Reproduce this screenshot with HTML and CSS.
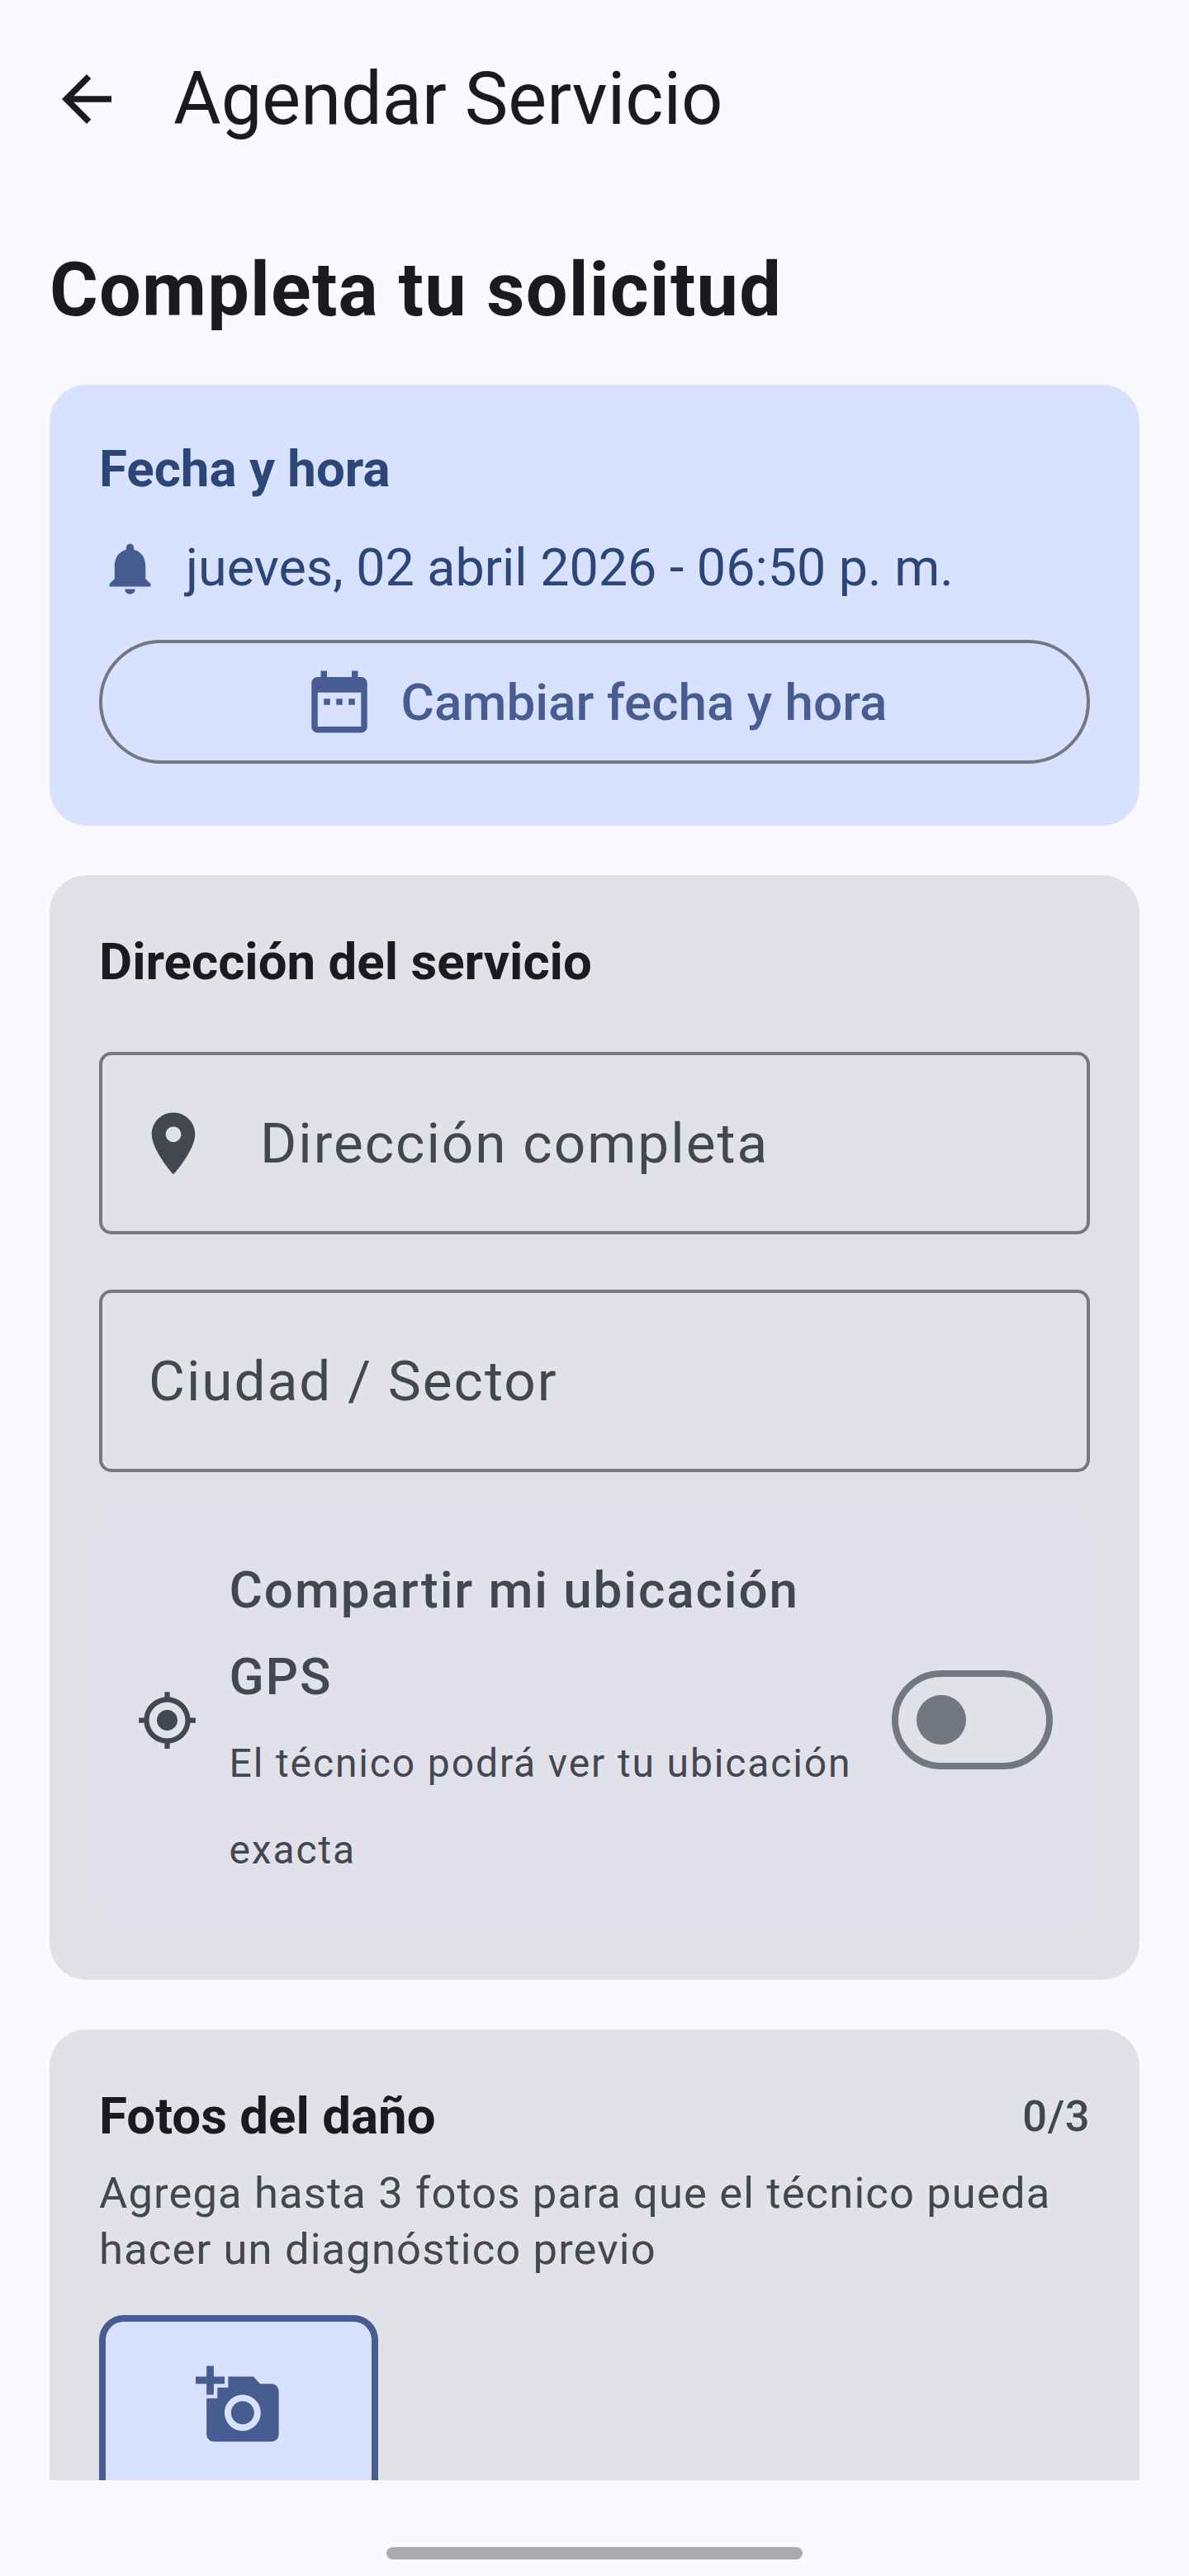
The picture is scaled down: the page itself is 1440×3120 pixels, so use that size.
FILE: index.html
```html
<!DOCTYPE html>
<html lang="es">
<head>
<meta charset="utf-8">
<title>Agendar Servicio</title>
<link rel="stylesheet" href="styles.css">
</head>
<body>
<div class="screen">
  <main class="scroll">
    <header class="topbar">
      <svg class="icon-back" viewBox="0 0 24 24"><path d="M20 11H7.83l5.59-5.59L12 4l-8 8 8 8 1.41-1.41L7.83 13H20v-2z"/></svg>
      <h1 class="topbar-title">Agendar Servicio</h1>
    </header>
    <h2 class="headline">Completa tu solicitud</h2>

    <section class="card card-blue">
      <h3 class="card-title title-blue">Fecha y hora</h3>
      <div class="date-row">
        <svg class="icon-bell" viewBox="0 0 24 24"><path d="M12 22c1.1 0 2-.9 2-2h-4c0 1.1.9 2 2 2zm6-6v-5c0-3.07-1.63-5.64-4.5-6.32V4c0-.83-.67-1.5-1.5-1.5s-1.5.67-1.5 1.5v.68C7.64 5.36 6 7.92 6 11v5l-2 2v1h16v-1l-2-2z"/></svg>
        <span class="date-text">jueves, 02 abril 2026 - 06:50 p. m.</span>
      </div>
      <button class="outline-btn" type="button">
        <svg class="icon-cal" viewBox="0 0 24 24"><path d="M9 11H7v2h2v-2zm4 0h-2v2h2v-2zm4 0h-2v2h2v-2zm2-7h-1V2h-2v2H8V2H6v2H5c-1.11 0-1.99.9-1.99 2L3 20c0 1.1.89 2 2 2h14c1.1 0 2-.9 2-2V6c0-1.1-.9-2-2-2zm0 16H5V9h14v11z"/></svg>
        <span>Cambiar fecha y hora</span>
      </button>
    </section>

    <section class="card card-gray">
      <h3 class="card-title">Dirección del servicio</h3>
      <div class="field field-address">
        <svg class="icon-pin" viewBox="0 0 24 24"><path d="M12 2C8.13 2 5 5.13 5 9c0 5.25 7 13 7 13s7-7.75 7-13c0-3.87-3.13-7-7-7zm0 9.5c-1.38 0-2.5-1.12-2.5-2.5s1.12-2.5 2.5-2.5 2.5 1.12 2.5 2.5-1.12 2.5-2.5 2.5z"/></svg>
        <span class="field-label">Dirección completa</span>
      </div>
      <div class="field field-city">
        <span class="field-label">Ciudad / Sector</span>
      </div>
      <div class="gps-row">
        <svg class="icon-gps" viewBox="0 0 24 24"><path d="M12 8c-2.21 0-4 1.79-4 4s1.79 4 4 4 4-1.79 4-4-1.79-4-4-4zm8.94 3c-.46-4.17-3.77-7.48-7.94-7.94V1h-2v2.06C6.83 3.52 3.52 6.83 3.06 11H1v2h2.06c.46 4.17 3.77 7.48 7.94 7.94V23h2v-2.06c4.17-.46 7.48-3.77 7.94-7.94H23v-2h-2.06zM12 19c-3.87 0-7-3.13-7-7s3.13-7 7-7 7 3.13 7 7-3.13 7-7 7z"/></svg>
        <div class="gps-text">
          <div class="gps-title">Compartir mi ubicación GPS</div>
          <div class="gps-sub">El técnico podrá ver tu ubicación exacta</div>
        </div>
        <div class="switch"><span class="switch-knob"></span></div>
      </div>
    </section>

    <section class="card card-gray">
      <div class="photos-head">
        <h3 class="card-title photos-title">Fotos del daño</h3>
        <span class="photos-count">0/3</span>
      </div>
      <p class="photos-desc">Agrega hasta 3 fotos para que el técnico pueda hacer un diagnóstico previo</p>
      <div class="photo-tile">
        <svg class="icon-addphoto" viewBox="0 0 24 24"><path d="M3 4V1h2v3h3v2H5v3H3V6H0V4h3zm3 6V7h3V4h7l1.83 2H21c1.1 0 2 .9 2 2v12c0 1.1-.9 2-2 2H5c-1.1 0-2-.9-2-2V10h3zm7 9c2.76 0 5-2.24 5-5s-2.24-5-5-5-5 2.24-5 5 2.24 5 5 5zm-3.2-5c0 1.77 1.43 3.2 3.2 3.2s3.2-1.43 3.2-3.2-1.43-3.2-3.2-3.2-3.2 1.43-3.2 3.2z"/></svg>
      </div>
    </section>
  </main>
  <div class="navbar"><span class="nav-pill"></span></div>
</div>
</body>
</html>
```
FILE: styles.css
```css
* { box-sizing: border-box; }
html, body { margin: 0; padding: 0; }
body {
  background: #f9f9ff;
  color: #1a1b20;
  font-family: Roboto, "Noto Sans", sans-serif;
}
h1, h2, h3, p { margin: 0; font-weight: 400; }
svg { display: block; flex: none; fill: currentColor; }

.screen {
  width: 1440px;
  height: 3120px;
  display: flex;
  flex-direction: column;
  overflow: hidden;
}
.scroll {
  height: 3004px;
  flex: none;
  overflow: hidden;
  padding: 0 60px;
  display: flex;
  flex-direction: column;
}

.topbar {
  height: 240px;
  flex: none;
  display: flex;
  align-items: center;
  gap: 60px;
}
.icon-back { width: 90px; height: 90px; }
.topbar-title { font-size: 88.4px; line-height: 105px; }

.headline {
  flex: none;
  font-size: 90px;
  line-height: 120px;
  letter-spacing: 1.2px;
  font-weight: 700;
  margin-top: 52px;
  height: 174px;
}

.card {
  flex: none;
  border-radius: 45px;
  padding: 60px;
  margin-bottom: 60px;
}
.card-blue { background: #d8e2ff; height: 534px; padding-top: 57px; color: #2c4678; }
.card-gray { background: #e1e2e8; }

.card-title { font-size: 61.8px; line-height: 90px; font-weight: 700; }

.date-row {
  display: flex;
  align-items: center;
  gap: 30px;
  margin-top: 30px;
  height: 90px;
}
.icon-bell { width: 75px; height: 75px; color: #475d92; }
.date-text { font-size: 62.8px; line-height: 90px; }

.outline-btn {
  display: flex;
  align-items: center;
  justify-content: center;
  gap: 30px;
  width: 1200px;
  height: 150px;
  margin-top: 42px;
  border: 4px solid #74777f;
  border-radius: 75px;
  background: transparent;
  color: #475d92;
  font-family: inherit;
  font-size: 62px;
  font-weight: 500;
  padding: 0;
}
.icon-cal { width: 90px; height: 90px; }

.field {
  display: flex;
  align-items: center;
  height: 221px;
  border: 4px solid #74777f;
  border-radius: 15px;
  color: #44474e;
}
.field-address { margin-top: 64px; padding-left: 41px; gap: 60px; }
.field-city { margin-top: 67px; padding-left: 56px; }
.icon-pin { width: 90px; height: 90px; }
.field-label { font-size: 67.5px; line-height: 90px; letter-spacing: 2px; }

.gps-row {
  display: flex;
  align-items: center;
  gap: 37.5px;
  margin-top: 45px;
  padding: 45px;
  background: #e1e1eb;
  border-radius: 30px;
  color: #44474e;
}
.icon-gps { width: 75px; height: 75px; }
.gps-text { flex: 1; min-width: 0; }
.gps-title { font-size: 62px; line-height: 105px; font-weight: 500; letter-spacing: 1.875px; }
.gps-sub { font-size: 48px; line-height: 105px; letter-spacing: 1.875px; }
.switch {
  flex: none;
  width: 195px;
  height: 120px;
  border: 8px solid #74777f;
  border-radius: 60px;
  background: #e1e2e8;
  display: flex;
  align-items: center;
  padding-left: 22px;
}
.switch-knob { width: 60px; height: 60px; border-radius: 50%; background: #74777f; }

.photos-head { display: flex; justify-content: space-between; align-items: center; }
.photos-count { font-size: 52.5px; line-height: 90px; font-weight: 500; letter-spacing: .5px; color: #44474e; }
.photos-desc { font-size: 52.5px; line-height: 68px; letter-spacing: 1.15px; color: #44474e; margin-top: 14px; }
.photo-tile {
  width: 338px;
  height: 338px;
  margin-top: 46px;
  border: 8px solid #475d92;
  border-radius: 30px;
  background: #d8e2ff;
  color: #475d92;
  display: flex;
  justify-content: center;
  padding-top: 49px;
}
.icon-addphoto { width: 105px; height: 105px; }

.navbar {
  flex: 1;
  display: flex;
  justify-content: center;
  padding-top: 81px;
}
.nav-pill { width: 504px; height: 15px; border-radius: 8px; background: #aaabb0; }
```
